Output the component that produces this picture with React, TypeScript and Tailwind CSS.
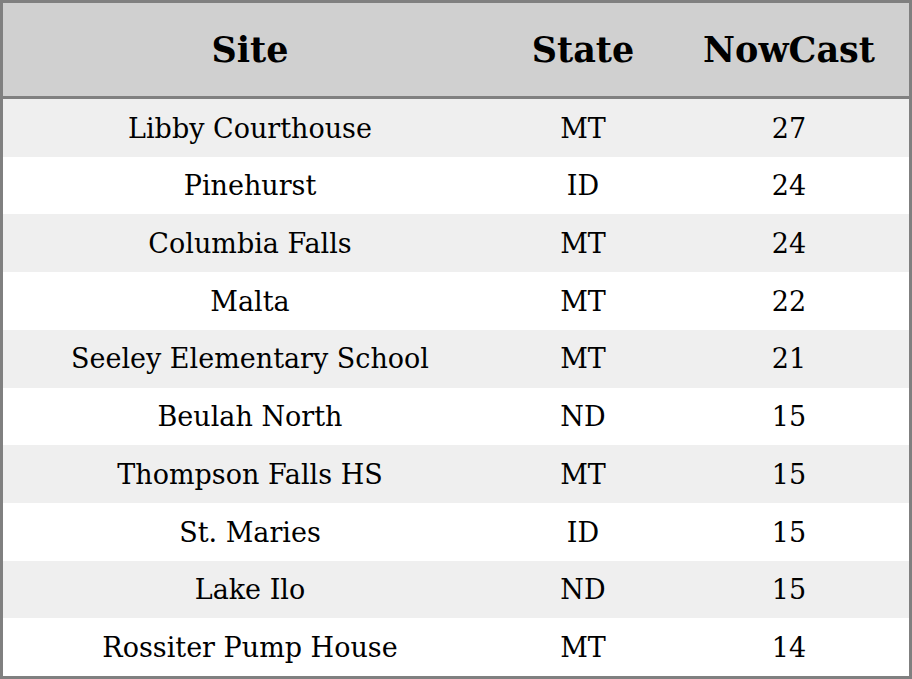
const rows = [
  ["Libby Courthouse", "MT", "27"],
  ["Pinehurst", "ID", "24"],
  ["Columbia Falls", "MT", "24"],
  ["Malta", "MT", "22"],
  ["Seeley Elementary School", "MT", "21"],
  ["Beulah North", "ND", "15"],
  ["Thompson Falls HS", "MT", "15"],
  ["St. Maries", "ID", "15"],
  ["Lake Ilo", "ND", "15"],
  ["Rossiter Pump House", "MT", "14"],
];

export default function App() {
  return (
    <div className="w-[912px] h-[679px] bg-white font-['DejaVu_Serif',serif] text-black">
      <div className="h-full border-[3px] border-[#808080] flex flex-col">
        <div className="h-[93px] pt-[2px] bg-[#d0d0d0] flex items-center text-[35px] font-bold">
          <div className="w-[494px] text-center">Site</div>
          <div className="w-[172px] text-center">State</div>
          <div className="flex-1 text-center">NowCast</div>
        </div>
        <div className="h-[3px] bg-[#808080]" />
        <div className="flex-1 flex flex-col">
          {rows.map((r, i) => (
            <div
              key={i}
              className={`flex-1 pt-[2px] flex items-center text-[27px] ${i % 2 === 0 ? "bg-[#efefef]" : "bg-white"}`}
            >
              <div className="w-[494px] text-center">{r[0]}</div>
              <div className="w-[172px] text-center">{r[1]}</div>
              <div className="flex-1 text-center">{r[2]}</div>
            </div>
          ))}
        </div>
      </div>
    </div>
  );
}
